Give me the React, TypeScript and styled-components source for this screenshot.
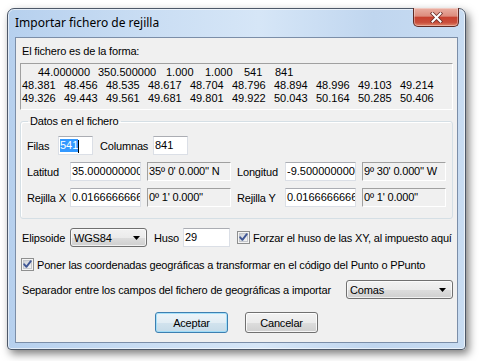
import styled, { createGlobalStyle } from "styled-components";

const GlobalStyle = createGlobalStyle`
  html, body {
    margin: 0;
    padding: 0;
    background: #ffffff;
  }
  body {
    width: 479px;
    height: 361px;
    overflow: hidden;
    font-family: "Liberation Sans", Arial, sans-serif;
    font-size: 11px;
    letter-spacing: -0.17px;
    color: #000;
  }
`;

const Page = styled.div`
  padding: 8px 0 0 7px;
`;

const Window = styled.div`
  width: 459px;
  height: 342px;
  box-sizing: border-box;
  display: flex;
  flex-direction: column;
  padding: 0 7px 6px 7px;
  border: 1px solid #4d5868;
  border-radius: 7px 7px 4px 4px;
  background: linear-gradient(
    90deg,
    #b6d0ee 0%,
    #c9ddf3 30%,
    #d6e6f7 55%,
    #c0d6ef 80%,
    #c8dcf2 100%
  );
  box-shadow: inset 0 0 0 1px rgba(255, 255, 255, 0.6),
    3px 4px 9px rgba(0, 0, 0, 0.5);
`;

const TitleBar = styled.div`
  height: 28px;
  display: flex;
  justify-content: space-between;
  align-items: flex-start;
  flex-shrink: 0;
`;

const Title = styled.div`
  font-family: "Noto Sans", "Liberation Sans", sans-serif;
  font-size: 12px;
  letter-spacing: 0;
  line-height: 28px;
  color: #000;
`;

const CloseButton = styled.div`
  width: 46px;
  height: 19px;
  box-sizing: border-box;
  margin: -1px -1px 0 0;
  display: flex;
  align-items: center;
  justify-content: center;
  border: 1px solid #5f2a24;
  border-top: none;
  border-radius: 0 0 5px 5px;
  background: linear-gradient(
    180deg,
    #eab0a3 0%,
    #dd8c7d 45%,
    #c7412f 52%,
    #c94e3b 80%,
    #e0876c 100%
  );
  box-shadow: inset 0 0 0 1px rgba(255, 255, 255, 0.35);
`;

const Client = styled.div`
  height: 306px;
  box-sizing: border-box;
  display: flex;
  flex-direction: column;
  padding: 7px 4px 9px 4px;
  border: 1px solid #7b8ea8;
  background: #f0f0f0;
`;

const Caption = styled.div`
  line-height: 13px;
  padding-left: 2px;
`;

const DataBox = styled.div`
  height: 47px;
  box-sizing: border-box;
  margin-top: 5px;
  padding: 2px 0 0 1px;
  border: 1px solid #a0a0a0;
  border-right-color: #ffffff;
  border-bottom-color: #ffffff;
  background: #f0f0f0;
  line-height: 13px;
  letter-spacing: 0;
  overflow: hidden;
`;

const DataLine = styled.div<{ $indent?: number }>`
  display: flex;
  white-space: nowrap;
  padding-left: ${(p) => p.$indent ?? 0}px;
`;

const Cell = styled.span<{ $w?: number }>`
  flex: 0 0 ${(p) => (p.$w ? `${p.$w}px` : "auto")};
`;

const Group = styled.fieldset`
  margin: 5px 0 0 0;
  padding: 8px 6px 11px 6px;
  min-width: 0;
  border: 1px solid #d5dfe5;
  border-radius: 3px;
  box-shadow: inset 1px 1px 0 #ffffff;
  display: flex;
  flex-direction: column;
  gap: 7px;
`;

const Legend = styled.legend`
  margin-left: 1px;
  padding: 0 2px;
  line-height: 13px;
`;

const Row = styled.div<{ $gap?: number }>`
  display: flex;
  align-items: center;
  height: 19px;
  flex-shrink: 0;
  margin-top: ${(p) => p.$gap ?? 0}px;
`;

const Label = styled.span<{ $w?: number; $pad?: number }>`
  flex: ${(p) => (p.$w ? `0 0 ${p.$w}px` : "1 1 auto")};
  box-sizing: border-box;
  padding-left: ${(p) => p.$pad ?? 0}px;
  white-space: nowrap;
`;

const Edit = styled.div<{ $w: number }>`
  width: ${(p) => p.$w}px;
  height: 19px;
  flex-shrink: 0;
  box-sizing: border-box;
  padding: 0 1px;
  border: 1px solid #dbdfe6;
  border-top-color: #abadb3;
  background: #ffffff;
  line-height: 17px;
  letter-spacing: 0;
  white-space: nowrap;
  overflow: hidden;
`;

const Selected = styled.span`
  background: #3399ff;
  color: #ffffff;
  line-height: 13px;
  display: inline-block;
`;

const Caret = styled.span`
  display: inline-block;
  width: 1px;
  height: 13px;
  background: #000;
  vertical-align: middle;
`;

const Static = styled.div<{ $w: number; $ml?: number }>`
  width: ${(p) => p.$w}px;
  height: 19px;
  flex-shrink: 0;
  box-sizing: border-box;
  margin-left: ${(p) => p.$ml ?? 0}px;
  padding-left: 1px;
  border: 1px solid #a0a0a0;
  border-right-color: #ffffff;
  border-bottom-color: #ffffff;
  background: #f0f0f0;
  line-height: 17px;
  white-space: nowrap;
  overflow: hidden;
`;

const Combo = styled.div<{ $w: number }>`
  width: ${(p) => p.$w}px;
  height: 19px;
  flex-shrink: 0;
  box-sizing: border-box;
  display: flex;
  align-items: center;
  justify-content: space-between;
  padding: 0 6px 0 3px;
  border: 1px solid #707070;
  border-radius: 3px;
  background: linear-gradient(
    180deg,
    #f2f2f2 0%,
    #ebebeb 50%,
    #dddddd 51%,
    #cfcfcf 100%
  );
  box-shadow: inset 0 0 0 1px rgba(255, 255, 255, 0.7);
`;

const CheckLabel = styled.span`
  margin-left: 3px;
  white-space: nowrap;
`;

const Box = styled.span<{ $ml?: number }>`
  display: inline-flex;
  margin-left: ${(p) => p.$ml ?? 0}px;
  flex-shrink: 0;
`;

const Button = styled.div<{ $default?: boolean }>`
  width: 73px;
  height: 21px;
  box-sizing: border-box;
  display: flex;
  align-items: center;
  justify-content: center;
  border: 1px solid ${(p) => (p.$default ? "#3c7fb1" : "#707070")};
  border-radius: 3px;
  background: ${(p) =>
    p.$default
      ? "linear-gradient(180deg, #ecf4f9 0%, #e2edf4 50%, #d2e3ee 51%, #c6dbe8 100%)"
      : "linear-gradient(180deg, #f2f2f2 0%, #ebebeb 50%, #dddddd 51%, #cfcfcf 100%)"};
  box-shadow: inset 0 0 0 1px
    ${(p) => (p.$default ? "rgba(150, 220, 250, 0.8)" : "rgba(255, 255, 255, 0.8)")};
`;

const ButtonRow = styled.div`
  display: flex;
  justify-content: center;
  gap: 17px;
  margin-top: 13px;
`;

function Arrow() {
  return (
    <svg width="7" height="4" viewBox="0 0 7 4">
      <polygon points="0,0 7,0 3.5,4" fill="#000" />
    </svg>
  );
}

function CheckBox({ ml }: { ml?: number }) {
  return (
    <Box $ml={ml}>
      <svg width="13" height="13" viewBox="0 0 13 13">
        <defs>
          <linearGradient id="cbfill" x1="0" y1="0" x2="1" y2="1">
            <stop offset="0" stopColor="#cbcfd5" />
            <stop offset="1" stopColor="#f7f7f7" />
          </linearGradient>
        </defs>
        <rect x="0.5" y="0.5" width="12" height="12" fill="#f4f4f4" stroke="#8e8f8f" />
        <rect x="2.5" y="2.5" width="8" height="8" fill="url(#cbfill)" stroke="#c4c7cc" />
        <path
          d="M3.2 6.3 L5.4 8.8 L9.8 3.2"
          fill="none"
          stroke="#3f5695"
          strokeWidth="1.9"
          strokeLinecap="round"
          strokeLinejoin="round"
        />
      </svg>
    </Box>
  );
}

const line2 = ["48.381", "48.456", "48.535", "48.617", "48.704", "48.796", "48.894", "48.996", "49.103", "49.214"];
const line3 = ["49.326", "49.443", "49.561", "49.681", "49.801", "49.922", "50.043", "50.164", "50.285", "50.406"];

export default function App() {
  return (
    <Page>
      <GlobalStyle />
      <Window>
        <TitleBar>
          <Title>Importar fichero de rejilla</Title>
          <CloseButton>
            <svg width="13" height="11" viewBox="0 0 13 11">
              <path d="M2.5 1.5 L10.5 9.5 M10.5 1.5 L2.5 9.5" stroke="#6b2e26" strokeWidth="3.6" strokeLinecap="square" />
              <path d="M2.5 1.5 L10.5 9.5 M10.5 1.5 L2.5 9.5" stroke="#ffffff" strokeWidth="2" strokeLinecap="square" />
            </svg>
          </CloseButton>
        </TitleBar>
        <Client>
          <Caption>El fichero es de la forma:</Caption>
          <DataBox>
            <DataLine $indent={16}>
              <Cell $w={60}>44.000000</Cell>
              <Cell $w={68}>350.500000</Cell>
              <Cell $w={39}>1.000</Cell>
              <Cell $w={39}>1.000</Cell>
              <Cell $w={31}>541</Cell>
              <Cell>841</Cell>
            </DataLine>
            <DataLine>
              {line2.map((v, i) => (
                <Cell key={i} $w={42}>{v}</Cell>
              ))}
            </DataLine>
            <DataLine>
              {line3.map((v, i) => (
                <Cell key={i} $w={42}>{v}</Cell>
              ))}
            </DataLine>
          </DataBox>

          <Group>
            <Legend>Datos en el fichero</Legend>
            <Row>
              <Label $w={31}>Filas</Label>
              <Edit $w={35}>
                <Selected>541</Selected>
                <Caret />
              </Edit>
              <Label $w={60} $pad={7}>Columnas</Label>
              <Edit $w={35}>841</Edit>
            </Row>
            <Row>
              <Label $w={43}>Latitud</Label>
              <Edit $w={71}>35.0000000000</Edit>
              <Static $w={84} $ml={6}>35º 0' 0.000'' N</Static>
              <Label $w={54} $pad={6}>Longitud</Label>
              <Edit $w={71}>-9.500000000</Edit>
              <Static $w={84} $ml={6}>9º 30' 0.000'' W</Static>
            </Row>
            <Row>
              <Label $w={43}>Rejilla X</Label>
              <Edit $w={71}>0.0166666666</Edit>
              <Static $w={84} $ml={6}>0º 1' 0.000''</Static>
              <Label $w={54} $pad={6}>Rejilla Y</Label>
              <Edit $w={71}>0.0166666666</Edit>
              <Static $w={84} $ml={6}>0º 1' 0.000''</Static>
            </Row>
          </Group>

          <Row $gap={9}>
            <Label $w={50} $pad={2}>Elipsoide</Label>
            <Combo $w={77}>
              <span>WGS84</span>
              <Arrow />
            </Combo>
            <Label $w={36} $pad={7}>Huso</Label>
            <Edit $w={47}>29</Edit>
            <CheckBox ml={7} />
            <CheckLabel>Forzar el huso de las XY, al impuesto aquí</CheckLabel>
          </Row>

          <Row $gap={8}>
            <CheckBox ml={1} />
            <CheckLabel>
              Poner las coordenadas geográficas a transformar en el código del Punto o PPunto
            </CheckLabel>
          </Row>

          <Row $gap={6}>
            <Label $pad={2}>Separador entre los campos del fichero de geográficas a importar</Label>
            <Combo $w={107}>
              <span>Comas</span>
              <Arrow />
            </Combo>
          </Row>

          <ButtonRow>
            <Button $default>Aceptar</Button>
            <Button>Cancelar</Button>
          </ButtonRow>
        </Client>
      </Window>
    </Page>
  );
}
